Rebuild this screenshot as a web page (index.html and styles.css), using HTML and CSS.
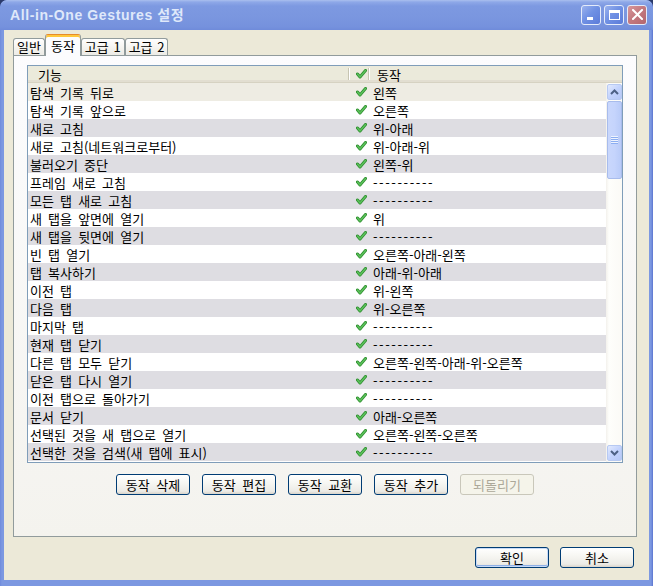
FILE: index.html
```html
<!DOCTYPE html>
<html lang="ko">
<head>
<meta charset="utf-8">
<title>All-in-One Gestures 설정</title>
<link rel="stylesheet" href="styles.css">
</head>
<body>
<div class="window">
  <div class="titlebar">
    <span class="title">All-in-One Gestures 설정</span>
    <div class="caption-btns">
      <span class="cbtn cmin"><span class="glyph-min"></span></span>
      <span class="cbtn cmax"><span class="glyph-max"></span></span>
      <span class="cbtn cclose">
        <svg width="11" height="11" viewBox="0 0 11 11"><path d="M1 1 L10 10 M10 1 L1 10" stroke="#fff" stroke-width="2" stroke-linecap="square"/></svg>
      </span>
    </div>
  </div>
  <div class="client">
    <div class="tabs">
      <div class="tab">일반</div>
      <div class="tab sel">동작</div>
      <div class="tab">고급 1</div>
      <div class="tab">고급 2</div>
    </div>
    <div class="panel">
      <div class="listbox">
        <div class="lhead">
          <div class="h1">기능</div>
          <div class="hsep"></div>
          <div class="h2"><svg class="chk" width="11" height="10" viewBox="0 0 11 10"><path d="M1.5 5 L4 8 L9.5 1.5" fill="none" stroke="#2f8f2f" stroke-width="3" stroke-linecap="round" stroke-linejoin="round"/><path d="M1.5 5 L4 8 L9.5 1.5" fill="none" stroke="#5cc25c" stroke-width="1.4" stroke-linecap="round" stroke-linejoin="round"/></svg></div>
          <div class="hsep"></div>
          <div class="h3">동작</div>
        </div>
        <div class="lbody">
          <div class="rows">
            <div class="row first"><span class="c1">탐색 기록 뒤로</span><span class="c2"><svg class="chk" width="11" height="10" viewBox="0 0 11 10"><path d="M1.5 5 L4 8 L9.5 1.5" fill="none" stroke="#2f8f2f" stroke-width="3" stroke-linecap="round" stroke-linejoin="round"/><path d="M1.5 5 L4 8 L9.5 1.5" fill="none" stroke="#5cc25c" stroke-width="1.4" stroke-linecap="round" stroke-linejoin="round"/></svg></span><span class="c3">왼쪽</span></div>
            <div class="row"><span class="c1">탐색 기록 앞으로</span><span class="c2"><svg class="chk" width="11" height="10" viewBox="0 0 11 10"><path d="M1.5 5 L4 8 L9.5 1.5" fill="none" stroke="#2f8f2f" stroke-width="3" stroke-linecap="round" stroke-linejoin="round"/><path d="M1.5 5 L4 8 L9.5 1.5" fill="none" stroke="#5cc25c" stroke-width="1.4" stroke-linecap="round" stroke-linejoin="round"/></svg></span><span class="c3">오른쪽</span></div>
            <div class="row alt"><span class="c1">새로 고침</span><span class="c2"><svg class="chk" width="11" height="10" viewBox="0 0 11 10"><path d="M1.5 5 L4 8 L9.5 1.5" fill="none" stroke="#2f8f2f" stroke-width="3" stroke-linecap="round" stroke-linejoin="round"/><path d="M1.5 5 L4 8 L9.5 1.5" fill="none" stroke="#5cc25c" stroke-width="1.4" stroke-linecap="round" stroke-linejoin="round"/></svg></span><span class="c3">위-아래</span></div>
            <div class="row"><span class="c1">새로 고침(네트워크로부터)</span><span class="c2"><svg class="chk" width="11" height="10" viewBox="0 0 11 10"><path d="M1.5 5 L4 8 L9.5 1.5" fill="none" stroke="#2f8f2f" stroke-width="3" stroke-linecap="round" stroke-linejoin="round"/><path d="M1.5 5 L4 8 L9.5 1.5" fill="none" stroke="#5cc25c" stroke-width="1.4" stroke-linecap="round" stroke-linejoin="round"/></svg></span><span class="c3">위-아래-위</span></div>
            <div class="row alt"><span class="c1">불러오기 중단</span><span class="c2"><svg class="chk" width="11" height="10" viewBox="0 0 11 10"><path d="M1.5 5 L4 8 L9.5 1.5" fill="none" stroke="#2f8f2f" stroke-width="3" stroke-linecap="round" stroke-linejoin="round"/><path d="M1.5 5 L4 8 L9.5 1.5" fill="none" stroke="#5cc25c" stroke-width="1.4" stroke-linecap="round" stroke-linejoin="round"/></svg></span><span class="c3">왼쪽-위</span></div>
            <div class="row"><span class="c1">프레임 새로 고침</span><span class="c2"><svg class="chk" width="11" height="10" viewBox="0 0 11 10"><path d="M1.5 5 L4 8 L9.5 1.5" fill="none" stroke="#2f8f2f" stroke-width="3" stroke-linecap="round" stroke-linejoin="round"/><path d="M1.5 5 L4 8 L9.5 1.5" fill="none" stroke="#5cc25c" stroke-width="1.4" stroke-linecap="round" stroke-linejoin="round"/></svg></span><span class="c3 none">----------</span></div>
            <div class="row alt"><span class="c1">모든 탭 새로 고침</span><span class="c2"><svg class="chk" width="11" height="10" viewBox="0 0 11 10"><path d="M1.5 5 L4 8 L9.5 1.5" fill="none" stroke="#2f8f2f" stroke-width="3" stroke-linecap="round" stroke-linejoin="round"/><path d="M1.5 5 L4 8 L9.5 1.5" fill="none" stroke="#5cc25c" stroke-width="1.4" stroke-linecap="round" stroke-linejoin="round"/></svg></span><span class="c3 none">----------</span></div>
            <div class="row"><span class="c1">새 탭을 앞면에 열기</span><span class="c2"><svg class="chk" width="11" height="10" viewBox="0 0 11 10"><path d="M1.5 5 L4 8 L9.5 1.5" fill="none" stroke="#2f8f2f" stroke-width="3" stroke-linecap="round" stroke-linejoin="round"/><path d="M1.5 5 L4 8 L9.5 1.5" fill="none" stroke="#5cc25c" stroke-width="1.4" stroke-linecap="round" stroke-linejoin="round"/></svg></span><span class="c3">위</span></div>
            <div class="row alt"><span class="c1">새 탭을 뒷면에 열기</span><span class="c2"><svg class="chk" width="11" height="10" viewBox="0 0 11 10"><path d="M1.5 5 L4 8 L9.5 1.5" fill="none" stroke="#2f8f2f" stroke-width="3" stroke-linecap="round" stroke-linejoin="round"/><path d="M1.5 5 L4 8 L9.5 1.5" fill="none" stroke="#5cc25c" stroke-width="1.4" stroke-linecap="round" stroke-linejoin="round"/></svg></span><span class="c3 none">----------</span></div>
            <div class="row"><span class="c1">빈 탭 열기</span><span class="c2"><svg class="chk" width="11" height="10" viewBox="0 0 11 10"><path d="M1.5 5 L4 8 L9.5 1.5" fill="none" stroke="#2f8f2f" stroke-width="3" stroke-linecap="round" stroke-linejoin="round"/><path d="M1.5 5 L4 8 L9.5 1.5" fill="none" stroke="#5cc25c" stroke-width="1.4" stroke-linecap="round" stroke-linejoin="round"/></svg></span><span class="c3">오른쪽-아래-왼쪽</span></div>
            <div class="row alt"><span class="c1">탭 복사하기</span><span class="c2"><svg class="chk" width="11" height="10" viewBox="0 0 11 10"><path d="M1.5 5 L4 8 L9.5 1.5" fill="none" stroke="#2f8f2f" stroke-width="3" stroke-linecap="round" stroke-linejoin="round"/><path d="M1.5 5 L4 8 L9.5 1.5" fill="none" stroke="#5cc25c" stroke-width="1.4" stroke-linecap="round" stroke-linejoin="round"/></svg></span><span class="c3">아래-위-아래</span></div>
            <div class="row"><span class="c1">이전 탭</span><span class="c2"><svg class="chk" width="11" height="10" viewBox="0 0 11 10"><path d="M1.5 5 L4 8 L9.5 1.5" fill="none" stroke="#2f8f2f" stroke-width="3" stroke-linecap="round" stroke-linejoin="round"/><path d="M1.5 5 L4 8 L9.5 1.5" fill="none" stroke="#5cc25c" stroke-width="1.4" stroke-linecap="round" stroke-linejoin="round"/></svg></span><span class="c3">위-왼쪽</span></div>
            <div class="row alt"><span class="c1">다음 탭</span><span class="c2"><svg class="chk" width="11" height="10" viewBox="0 0 11 10"><path d="M1.5 5 L4 8 L9.5 1.5" fill="none" stroke="#2f8f2f" stroke-width="3" stroke-linecap="round" stroke-linejoin="round"/><path d="M1.5 5 L4 8 L9.5 1.5" fill="none" stroke="#5cc25c" stroke-width="1.4" stroke-linecap="round" stroke-linejoin="round"/></svg></span><span class="c3">위-오른쪽</span></div>
            <div class="row"><span class="c1">마지막 탭</span><span class="c2"><svg class="chk" width="11" height="10" viewBox="0 0 11 10"><path d="M1.5 5 L4 8 L9.5 1.5" fill="none" stroke="#2f8f2f" stroke-width="3" stroke-linecap="round" stroke-linejoin="round"/><path d="M1.5 5 L4 8 L9.5 1.5" fill="none" stroke="#5cc25c" stroke-width="1.4" stroke-linecap="round" stroke-linejoin="round"/></svg></span><span class="c3 none">----------</span></div>
            <div class="row alt"><span class="c1">현재 탭 닫기</span><span class="c2"><svg class="chk" width="11" height="10" viewBox="0 0 11 10"><path d="M1.5 5 L4 8 L9.5 1.5" fill="none" stroke="#2f8f2f" stroke-width="3" stroke-linecap="round" stroke-linejoin="round"/><path d="M1.5 5 L4 8 L9.5 1.5" fill="none" stroke="#5cc25c" stroke-width="1.4" stroke-linecap="round" stroke-linejoin="round"/></svg></span><span class="c3 none">----------</span></div>
            <div class="row"><span class="c1">다른 탭 모두 닫기</span><span class="c2"><svg class="chk" width="11" height="10" viewBox="0 0 11 10"><path d="M1.5 5 L4 8 L9.5 1.5" fill="none" stroke="#2f8f2f" stroke-width="3" stroke-linecap="round" stroke-linejoin="round"/><path d="M1.5 5 L4 8 L9.5 1.5" fill="none" stroke="#5cc25c" stroke-width="1.4" stroke-linecap="round" stroke-linejoin="round"/></svg></span><span class="c3">오른쪽-왼쪽-아래-위-오른쪽</span></div>
            <div class="row alt"><span class="c1">닫은 탭 다시 열기</span><span class="c2"><svg class="chk" width="11" height="10" viewBox="0 0 11 10"><path d="M1.5 5 L4 8 L9.5 1.5" fill="none" stroke="#2f8f2f" stroke-width="3" stroke-linecap="round" stroke-linejoin="round"/><path d="M1.5 5 L4 8 L9.5 1.5" fill="none" stroke="#5cc25c" stroke-width="1.4" stroke-linecap="round" stroke-linejoin="round"/></svg></span><span class="c3 none">----------</span></div>
            <div class="row"><span class="c1">이전 탭으로 돌아가기</span><span class="c2"><svg class="chk" width="11" height="10" viewBox="0 0 11 10"><path d="M1.5 5 L4 8 L9.5 1.5" fill="none" stroke="#2f8f2f" stroke-width="3" stroke-linecap="round" stroke-linejoin="round"/><path d="M1.5 5 L4 8 L9.5 1.5" fill="none" stroke="#5cc25c" stroke-width="1.4" stroke-linecap="round" stroke-linejoin="round"/></svg></span><span class="c3 none">----------</span></div>
            <div class="row alt"><span class="c1">문서 닫기</span><span class="c2"><svg class="chk" width="11" height="10" viewBox="0 0 11 10"><path d="M1.5 5 L4 8 L9.5 1.5" fill="none" stroke="#2f8f2f" stroke-width="3" stroke-linecap="round" stroke-linejoin="round"/><path d="M1.5 5 L4 8 L9.5 1.5" fill="none" stroke="#5cc25c" stroke-width="1.4" stroke-linecap="round" stroke-linejoin="round"/></svg></span><span class="c3">아래-오른쪽</span></div>
            <div class="row"><span class="c1">선택된 것을 새 탭으로 열기</span><span class="c2"><svg class="chk" width="11" height="10" viewBox="0 0 11 10"><path d="M1.5 5 L4 8 L9.5 1.5" fill="none" stroke="#2f8f2f" stroke-width="3" stroke-linecap="round" stroke-linejoin="round"/><path d="M1.5 5 L4 8 L9.5 1.5" fill="none" stroke="#5cc25c" stroke-width="1.4" stroke-linecap="round" stroke-linejoin="round"/></svg></span><span class="c3">오른쪽-왼쪽-오른쪽</span></div>
            <div class="row alt"><span class="c1">선택한 것을 검색(새 탭에 표시)</span><span class="c2"><svg class="chk" width="11" height="10" viewBox="0 0 11 10"><path d="M1.5 5 L4 8 L9.5 1.5" fill="none" stroke="#2f8f2f" stroke-width="3" stroke-linecap="round" stroke-linejoin="round"/><path d="M1.5 5 L4 8 L9.5 1.5" fill="none" stroke="#5cc25c" stroke-width="1.4" stroke-linecap="round" stroke-linejoin="round"/></svg></span><span class="c3 none">----------</span></div>
          </div>
          <div class="vscroll">
            <div class="sbtn"><svg width="9" height="6" viewBox="0 0 9 6"><path d="M1 5 L4.5 1.5 L8 5" fill="none" stroke="#4d6185" stroke-width="2"/></svg></div>
            <div class="thumb"><span class="grip"></span></div>
            <div class="track"></div>
            <div class="sbtn"><svg width="9" height="6" viewBox="0 0 9 6"><path d="M1 1 L4.5 4.5 L8 1" fill="none" stroke="#4d6185" stroke-width="2"/></svg></div>
          </div>
        </div>
      </div>
      <div class="actions">
        <button class="btn">동작 삭제</button>
        <button class="btn">동작 편집</button>
        <button class="btn">동작 교환</button>
        <button class="btn">동작 추가</button>
        <button class="btn disabled">되돌리기</button>
      </div>
    </div>
    <div class="footer">
      <button class="btn default">확인</button>
      <button class="btn">취소</button>
    </div>
  </div>
</div>
</body>
</html>
```

FILE: styles.css
```css
* { box-sizing: border-box; }
html, body { margin: 0; padding: 0; }
body {
  background: #2b3a6b;
  width: 653px;
  height: 586px;
  overflow: hidden;
  font-family: "Noto Sans CJK KR", "Noto Sans", sans-serif;
  font-size: 13px;
  color: #000;
}
.window {
  width: 653px;
  height: 586px;
  display: flex;
  flex-direction: column;
  background: linear-gradient(to right, #6f8bdc, #7c98e1 2px, #7c98e1 calc(100% - 2px), #5b74cf);
  border-radius: 7px 7px 0 0;
  overflow: hidden;
}
.titlebar {
  height: 30px;
  flex: none;
  display: flex;
  align-items: center;
  justify-content: space-between;
  padding: 0 6px 2px 10px;
  background: linear-gradient(to bottom, #aabfee 0, #8ea8e8 2px, #7d99e1 6px, #7a96df 60%, #7591dd 90%, #6f8bda 100%);
  border-radius: 7px 7px 0 0;
}
.title {
  font-family: "Liberation Sans", "Noto Sans CJK KR", sans-serif;
  font-weight: bold;
  font-size: 14px;
  color: #dfe8fa;
  letter-spacing: 0.6px;
}
.caption-btns {
  display: flex;
  gap: 3px;
  margin-top: 1px;
}
.cbtn {
  width: 20px;
  height: 20px;
  border: 1px solid #e4ebfa;
  border-radius: 3px;
  background: linear-gradient(135deg, #9ab2ee 0%, #7091e4 45%, #5b7bd9 100%);
  position: relative;
  display: flex;
  align-items: center;
  justify-content: center;
}
.cclose {
  background: linear-gradient(135deg, #d8989c 0%, #c47a80 45%, #b4666e 100%);
}
.glyph-min {
  position: absolute;
  left: 5px;
  top: 11px;
  width: 6px;
  height: 3px;
  background: #fff;
}
.glyph-max {
  width: 11px;
  height: 10px;
  border: 1px solid #fff;
  border-top-width: 3px;
}
.client {
  flex: 1;
  margin: 0 4px 6px 4px;
  background: #ece9d8;
  display: flex;
  flex-direction: column;
  padding: 4px 12px 0 9px;
}
.tabs {
  height: 21px;
  display: flex;
  align-items: flex-end;
  flex: none;
}
.tab {
  height: 17px;
  padding: 0 3px;
  border: 1px solid #919b9c;
  border-bottom: none;
  border-radius: 3px 3px 0 0;
  background: linear-gradient(#ffffff, #f4f3ee 60%, #ecebe6);
  line-height: 15px;
  word-spacing: 1px;
}
.tab.sel {
  height: 22px;
  padding: 2px 5px 0;
  margin-bottom: -1px;
  position: relative;
  z-index: 2;
  background: #fcfcfe;
  border-top-color: #e68b2c;
  box-shadow: inset 0 2px 0 #ffc83c;
  line-height: 18px;
}
.panel {
  height: 482px;
  flex: none;
  border: 1px solid #919b9c;
  background: linear-gradient(#fcfcfe, #f4f3ee);
  padding: 9px 13px 0;
  display: flex;
  flex-direction: column;
}
.listbox {
  height: 398px;
  border: 1px solid #7f9db9;
  background: #fff;
  display: flex;
  flex-direction: column;
}
.lhead {
  height: 17px;
  flex: none;
  display: flex;
  align-items: center;
  background: #ebeadb;
  border-bottom: 1px solid #d6d2c2;
  box-shadow: inset 0 -2px 0 #e2ded1;
}
.h1 {
  width: 321px;
  padding-left: 10px;
  line-height: 15px;
}
.hsep {
  width: 2px;
  height: 12px;
  border-left: 1px solid #c7c5b2;
  border-right: 1px solid #fff;
  margin-left: -1px;
}
.h2 {
  width: 19px;
  padding-left: 6px;
  display: flex;
  align-items: center;
}
.h3 {
  padding-left: 7px;
  line-height: 15px;
}
.chk { display: block; }
.lbody {
  flex: 1;
  display: flex;
  min-height: 0;
}
.rows {
  flex: 1;
  display: flex;
  flex-direction: column;
  overflow: hidden;
}
.row {
  height: 18px;
  flex: none;
  display: flex;
  align-items: center;
  background: #fff;
  word-spacing: 2.5px;
  white-space: nowrap;
}
.row.alt { background: #dedde2; }
.row.first { background: #eeece3; }
.c1 {
  width: 322px;
  padding-left: 2px;
  overflow: hidden;
}
.c2 {
  width: 20px;
  padding-left: 6px;
  display: flex;
  align-items: center;
}
.c3 {
  padding-left: 3px;
}
.c3.none {
  letter-spacing: 1.6px;
}
.vscroll {
  width: 16px;
  flex: none;
  display: flex;
  flex-direction: column;
  align-items: flex-end;
  background: linear-gradient(to right, #f3f1ec, #fefefb 3px, #fbfaf6);
  padding: 1px 0 1px;
}
.sbtn {
  width: 15px;
  height: 16px;
  flex: none;
  border: 1px solid #b7c9f2;
  border-radius: 2px;
  background: linear-gradient(135deg, #e2eafe, #c3d3fd 50%, #b6c8f6);
  display: flex;
  align-items: center;
  justify-content: center;
}
.thumb {
  width: 15px;
  height: 78px;
  margin-top: 1px;
  flex: none;
  border: 1px solid #a8bcec;
  border-radius: 2px;
  background: linear-gradient(to right, #c9d7fc, #c5d4fc 50%, #b9cbf8);
  display: flex;
  align-items: center;
  justify-content: center;
}
.grip {
  width: 7px;
  height: 8px;
  background: repeating-linear-gradient(to bottom, #eef3fe 0, #eef3fe 1px, #8caef1 1px, #8caef1 2px);
}
.track { flex: 1; }
.actions {
  margin-top: 11px;
  display: flex;
  justify-content: center;
  gap: 12px;
}
.btn {
  width: 74px;
  height: 21px;
  padding: 0;
  border: 1px solid #003c74;
  border-radius: 3px;
  background: linear-gradient(#ffffff, #f7f7f3 40%, #ecebe6 85%, #d9d4ca);
  font-family: "Noto Sans CJK KR", "Noto Sans", sans-serif;
  font-size: 13px;
  color: #000;
  word-spacing: 3px;
  line-height: 17px;
}
.btn.disabled {
  border-color: #c9c7ba;
  background: #f5f4ea;
  color: #aca899;
}
.btn.default {
  box-shadow: inset 0 0 0 1px #c7daf7, inset 0 -1px 0 1px #8fb0e6;
}
.footer {
  margin-top: 10px;
  display: flex;
  justify-content: flex-end;
  gap: 11px;
  padding-right: 3px;
}
```
